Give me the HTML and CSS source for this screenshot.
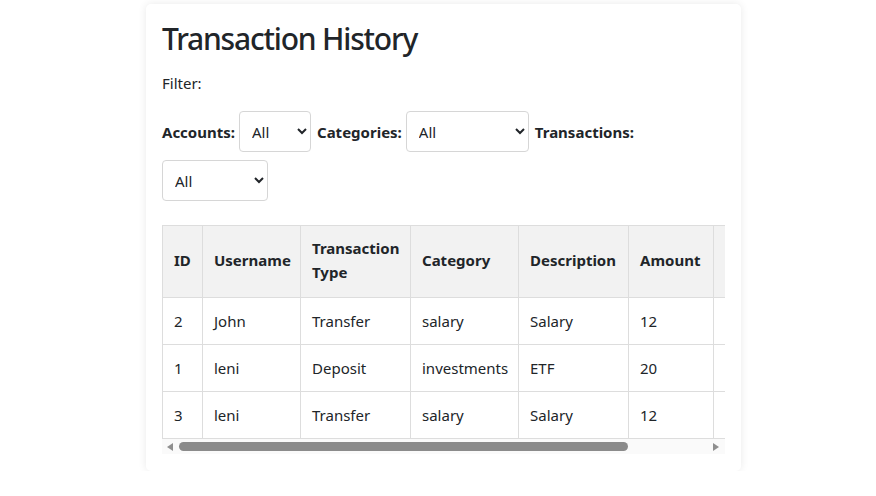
FILE: index.html
```html
<!DOCTYPE html>
<html lang="en">
<head>
<meta charset="utf-8">
<title>Transaction History</title>
<link rel="stylesheet" href="styles.css">
</head>
<body>
<main class="card">
  <h2 class="title">Transaction History</h2>
  <p class="filter-label">Filter:</p>
  <div class="filters">
    <label class="f-label" for="acc">Accounts:</label>
    <select id="acc" class="sel sel-acc"><option>All</option></select>
    <label class="f-label" for="cat">Categories:</label>
    <select id="cat" class="sel sel-cat"><option>All</option></select>
    <label class="f-label" for="trn">Transactions:</label>
    <select id="trn" class="sel sel-trn"><option>All</option></select>
  </div>
  <div class="table-wrap">
    <table class="tx">
      <colgroup>
        <col class="c-id"><col class="c-user"><col class="c-type"><col class="c-cat"><col class="c-desc"><col class="c-amt"><col class="c-more">
      </colgroup>
      <thead>
        <tr><th>ID</th><th>Username</th><th>Transaction Type</th><th>Category</th><th>Description</th><th>Amount</th><th></th></tr>
      </thead>
      <tbody>
        <tr><td>2</td><td>John</td><td>Transfer</td><td>salary</td><td>Salary</td><td>12</td><td></td></tr>
        <tr><td>1</td><td>leni</td><td>Deposit</td><td>investments</td><td>ETF</td><td>20</td><td></td></tr>
        <tr><td>3</td><td>leni</td><td>Transfer</td><td>salary</td><td>Salary</td><td>12</td><td></td></tr>
      </tbody>
    </table>
  </div>
  <div class="hscroll" aria-hidden="true">
    <span class="hs-btn"><span class="arrow arrow-left"></span></span>
    <span class="hs-track"><span class="hs-thumb"></span></span>
    <span class="hs-btn"><span class="arrow arrow-right"></span></span>
  </div>
</main>
</body>
</html>
```
FILE: styles.css
```css
html, body {
  margin: 0;
  padding: 0;
  background: #ffffff;
}
body {
  font-family: "Noto Sans", "Open Sans", sans-serif;
  font-size: 15px;
  line-height: 24px;
  color: #212529;
}
.card {
  width: 563px;
  margin: 4px 0 0 146px;
  padding: 16px 16px 17px;
  background: #fff;
  border-radius: 5px;
  box-shadow: 0 0 9px rgba(0, 0, 0, 0.09);
}
.title {
  margin: 0 0 13px;
  font-size: 30px;
  line-height: 38px;
  font-weight: 500;
  letter-spacing: -1.2px;
  color: #212529;
}
.filter-label {
  margin: 0 0 16px;
}
.filters {
  display: flex;
  flex-wrap: wrap;
  align-items: center;
  row-gap: 8px;
}
.f-label {
  font-weight: 700;
  margin-right: 4px;
}
.sel {
  height: 41px;
  margin-right: 6px;
  padding: 0 6px 0 8px;
  border: 1px solid #d6d6d6;
  border-radius: 4px;
  background: #fff;
  color: #212529;
  font-family: "Noto Sans", sans-serif;
  font-size: 15px;
}
.sel-acc { width: 72px; }
.sel-cat { width: 123px; }
.sel-trn { width: 106px; }

.table-wrap {
  margin-top: 24px;
  overflow: hidden;
}

.tx {
  width: 671px;
  table-layout: fixed;
  border-collapse: collapse;
}
.c-id { width: 40px; }
.c-user { width: 98px; }
.c-type { width: 110px; }
.c-cat { width: 108px; }
.c-desc { width: 110px; }
.c-amt { width: 85px; }
.c-more { width: 120px; }
.tx th,
.tx td {
  border: 1px solid #dddddd;
  text-align: left;
  vertical-align: middle;
  padding: 11px;
}
.tx th {
  padding: 10px 8px 13px 11px;
  background: #f2f2f2;
  font-weight: 700;
}

.hscroll {
  display: flex;
  height: 15px;
  background: #fafafa;
}
.hs-btn {
  width: 15px;
  flex: none;
  display: flex;
  align-items: center;
  justify-content: center;
}
.arrow {
  width: 0;
  height: 0;
  border-top: 4.5px solid transparent;
  border-bottom: 4.5px solid transparent;
}
.arrow-left {
  border-right: 6px solid #8f8f8f;
  margin-left: 1px;
}
.arrow-right {
  border-left: 6px solid #8f8f8f;
  margin-right: 3px;
}
.hs-track {
  flex: 1;
  display: flex;
  align-items: center;
  padding-left: 2px;
}
.hs-thumb {
  width: 449px;
  height: 9px;
  border-radius: 5px;
  background: #8b8b8b;
}
```
